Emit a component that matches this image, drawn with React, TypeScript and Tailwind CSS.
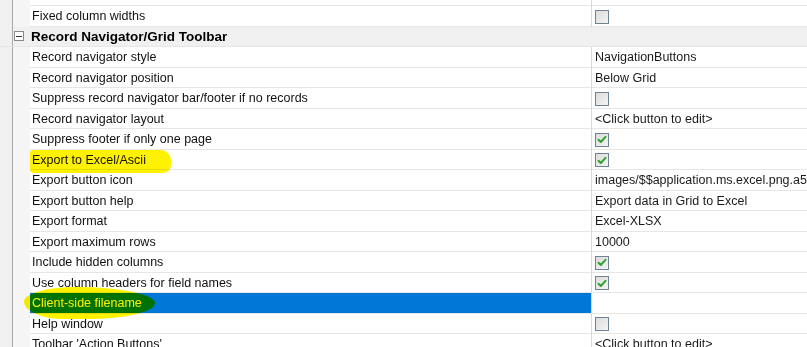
import React from "react";

type Row =
  | { kind: "prop"; name: string; value?: string; check?: boolean; selected?: boolean }
  | { kind: "header"; name: string };

const rows: Row[] = [
  { kind: "prop", name: "Fixed column widths", check: false },
  { kind: "header", name: "Record Navigator/Grid Toolbar" },
  { kind: "prop", name: "Record navigator style", value: "NavigationButtons" },
  { kind: "prop", name: "Record navigator position", value: "Below Grid" },
  { kind: "prop", name: "Suppress record navigator bar/footer if no records", check: false },
  { kind: "prop", name: "Record navigator layout", value: "<Click button to edit>" },
  { kind: "prop", name: "Suppress footer if only one page", check: true },
  { kind: "prop", name: "Export to Excel/Ascii", check: true },
  { kind: "prop", name: "Export button icon", value: "images/$$application.ms.excel.png.a5image" },
  { kind: "prop", name: "Export button help", value: "Export data in Grid to Excel" },
  { kind: "prop", name: "Export format", value: "Excel-XLSX" },
  { kind: "prop", name: "Export maximum rows", value: "10000" },
  { kind: "prop", name: "Include hidden columns", check: true },
  { kind: "prop", name: "Use column headers for field names", check: true },
  { kind: "prop", name: "Client-side filename", value: "", selected: true },
  { kind: "prop", name: "Help window", check: false },
  { kind: "prop", name: "Toolbar 'Action Buttons'", value: "<Click button to edit>" },
];

function CheckBox({ checked }: { checked: boolean }) {
  return (
    <div className="w-[14px] h-[14px] border border-[#6f8396] bg-gradient-to-br from-[#dcdcdc] to-[#f4f4f4] flex items-center justify-center">
      {checked && (
        <svg width="10" height="9" viewBox="0 0 10 9">
          <path d="M1.5 4.8 L3.8 7 L8.5 1.8" stroke="#2ea52e" strokeWidth="2" fill="none" strokeLinecap="round" strokeLinejoin="round" />
        </svg>
      )}
    </div>
  );
}

function Gutter() {
  return (
    <div className="flex shrink-0 h-full">
      <div className="w-[12px] h-full bg-[#f0f0f0]" />
      <div className="w-px h-full bg-[#a9a9a9]" />
      <div className="w-[17px] h-full bg-[#f5f5f5]" />
    </div>
  );
}

export default function App() {
  return (
    <div
      className="relative w-[807px] h-[347px] overflow-hidden bg-white text-[12.5px] text-[#111]"
      style={{ fontFamily: '"Liberation Sans", Arial, sans-serif' }}
    >
      <div className="flex flex-col">
        {/* partial row above */}
        <div className="flex h-[6px]">
          <Gutter />
          <div className="w-[561px] shrink-0 border-b border-[#e6e6e6]" />
          <div className="w-px bg-[#d8d8d8]" />
          <div className="flex-1 border-b border-[#e6e6e6]" />
        </div>
        {rows.map((r, i) =>
          r.kind === "header" ? (
            <div key={i} className="flex h-[20.5px] items-center bg-[#f0f0f0] border-b border-[#e6e6e6]">
              <div className="w-[12px] h-full shrink-0" />
              <div className="w-px h-full bg-[#a9a9a9] shrink-0" />
              <div className="w-[17px] h-full shrink-0 flex items-center justify-start pl-px">
                <div className="w-[10px] h-[10px] border border-[#8a8a8a] bg-white flex items-center justify-center">
                  <div className="w-[6px] h-px bg-[#333]" />
                </div>
              </div>
              <div className="pl-[1px] pt-px font-bold text-[13.5px] text-black">{r.name}</div>
            </div>
          ) : (
            <div key={i} className="flex h-[20.5px]">
              <Gutter />
              <div
                className={`w-[561px] shrink-0 flex items-center pl-[2px] pt-[2px] border-b border-[#e6e6e6] ${
                  r.selected ? "bg-[#0078d7] text-white" : "bg-white"
                }`}
              >
                {r.name}
              </div>
              <div className="w-px bg-[#d8d8d8] shrink-0" />
              <div className="flex-1 flex items-center pl-[3px] pt-[2px] whitespace-nowrap overflow-hidden text-[#1a1a1a] border-b border-[#e6e6e6]">
                {r.check !== undefined ? <CheckBox checked={r.check} /> : r.value}
              </div>
            </div>
          )
        )}
      </div>

      {/* highlighter marks */}
      <div className="absolute left-[30px] top-[150px] w-[141px] h-[23px] bg-[#fff200] mix-blend-multiply rounded-[3px_10px_8px_4px] pointer-events-none" />
      <div className="absolute left-[24px] top-[287px] w-[131px] h-[32px] bg-[#fff200] mix-blend-multiply rounded-[40%_60%_50%_30%/45%_50%_50%_55%] pointer-events-none" />
    </div>
  );
}
